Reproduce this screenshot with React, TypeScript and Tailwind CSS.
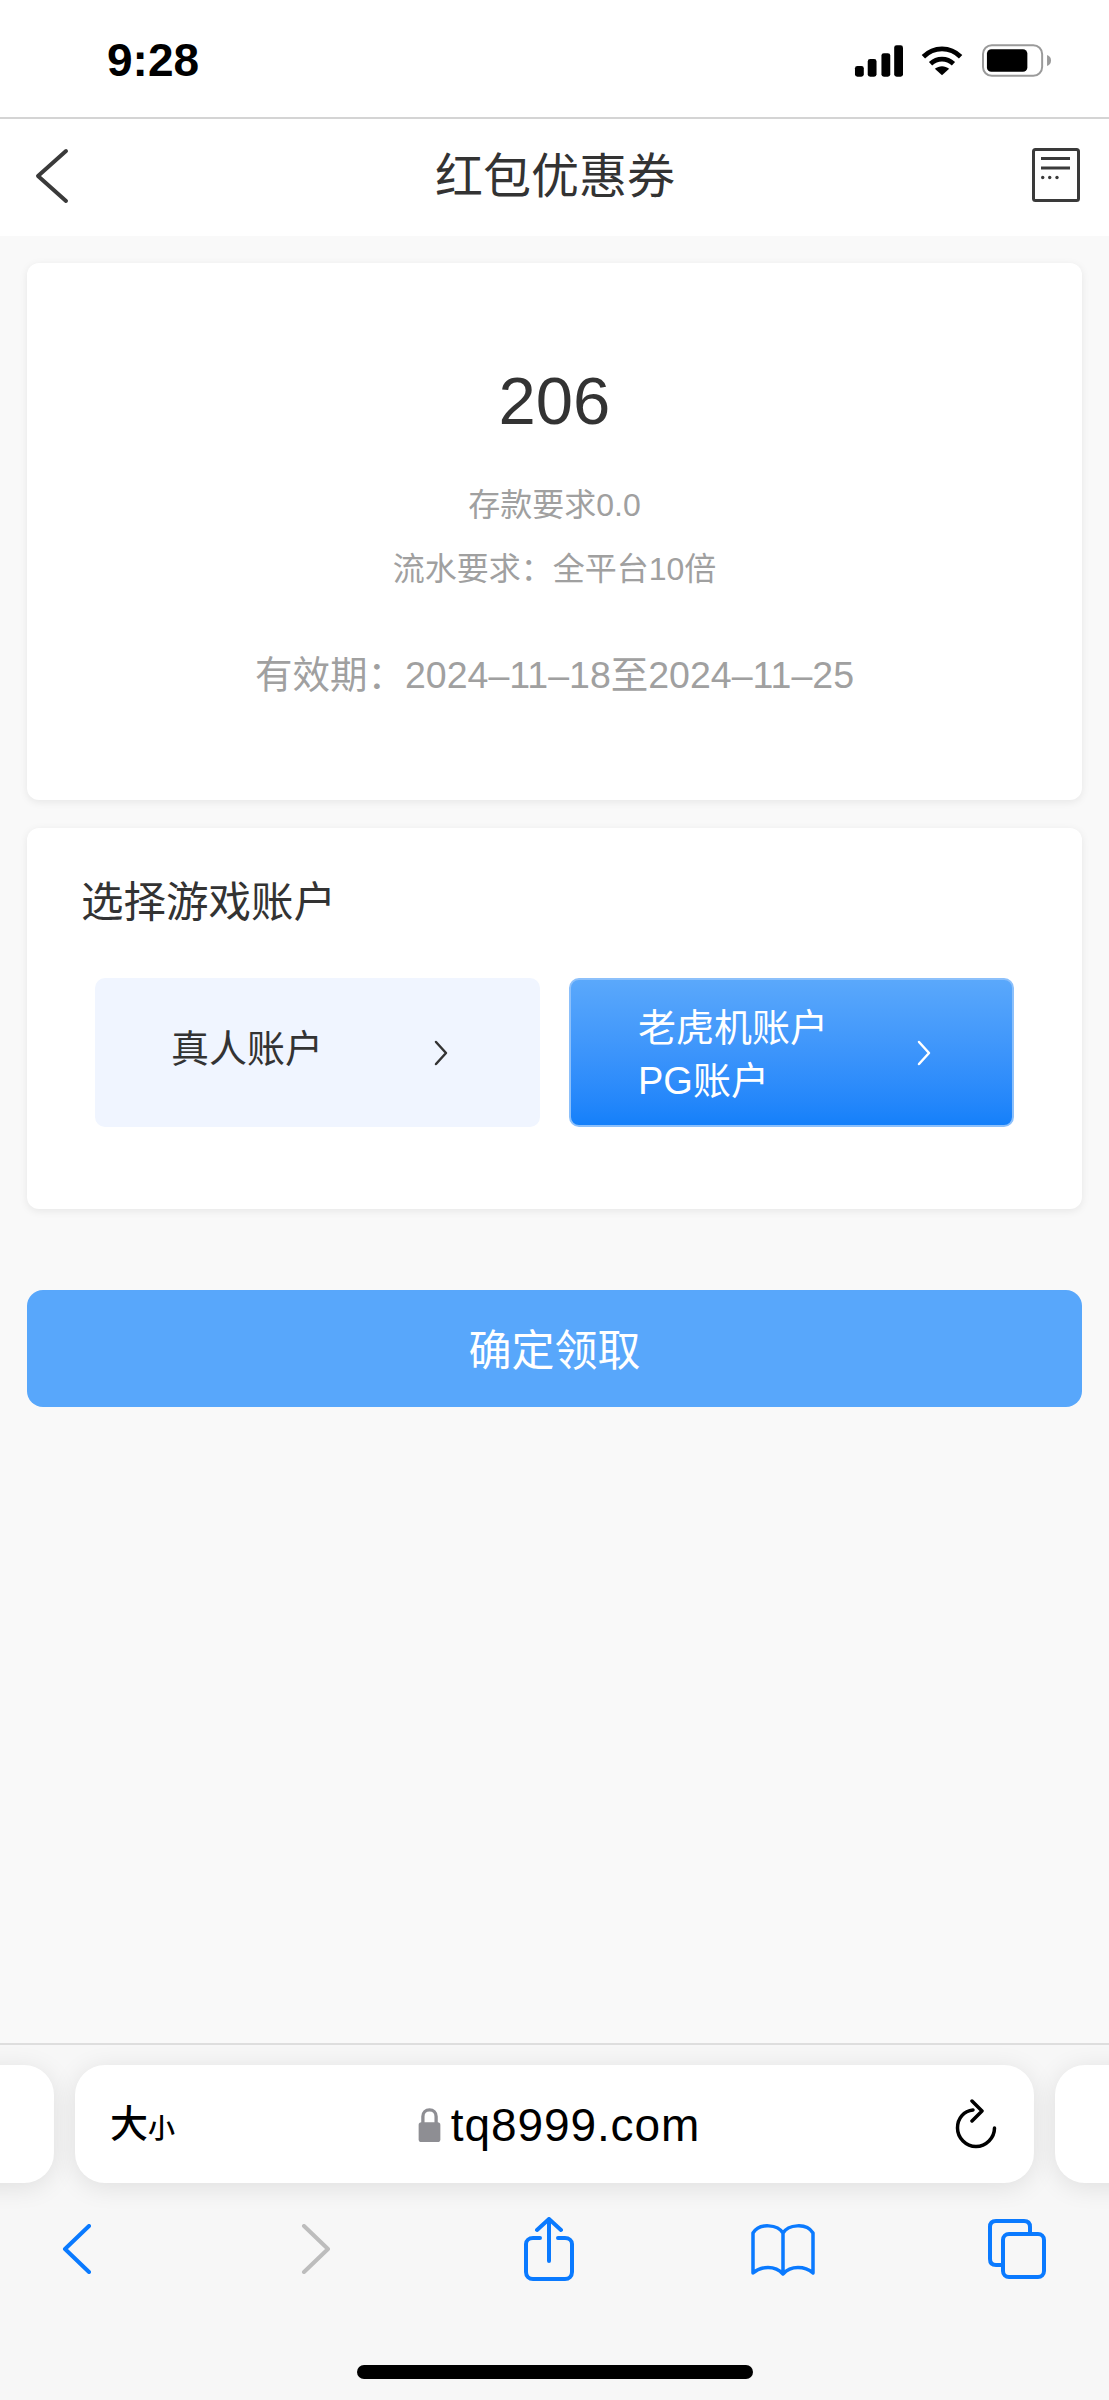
import React from 'react';

const cjk = "font-['Liberation_Sans','Noto_Sans_CJK_SC',sans-serif]";
const pill = 'h-[118px] bg-white rounded-[30px] shadow-[0_4px_26px_rgba(0,0,0,0.1)]';

const StatusBar: React.FC = () => (
  <div className="h-[117px] bg-white flex items-start justify-between pl-[107px] pr-[57px] pt-[34px]">
    <span className="text-[46px] leading-[52px] font-bold text-black font-['Liberation_Sans',sans-serif]">9:28</span>
    <div className="flex items-center gap-[18px] pt-[10px]">
      <svg width="49" height="32" viewBox="0 0 50 32" fill="#000">
        <rect x="1" y="21" width="9" height="11" rx="2.5" />
        <rect x="14" y="14" width="9" height="18" rx="2.5" />
        <rect x="28" y="8" width="9" height="24" rx="2.5" />
        <rect x="41" y="0" width="9" height="32" rx="2.5" />
      </svg>
      <svg width="42" height="32" viewBox="0 0 44 32" fill="none" stroke="#000" strokeWidth="5">
        <path d="M2.500 11.500C13.500 0.500 30.500 0.500 41.500 11.500" />
        <path d="M10 19C17 12.500 27 12.500 34 19" />
        <path d="M22 31L14.500 24C19 20.500 25 20.500 29.500 24Z" fill="#000" stroke="none" />
      </svg>
      <svg width="70" height="33" viewBox="0 0 71 33" fill="none" className="ml-[1px]">
        <rect x="1" y="1" width="60" height="31" rx="9" stroke="#9a9a9a" strokeWidth="2" />
        <rect x="5" y="5" width="41" height="23" rx="4.500" fill="#000" />
        <path d="M66 11C69 12 70 14 70 16.500C70 19 69 21 66 22Z" fill="#9a9a9a" />
      </svg>
    </div>
  </div>
);

const Header: React.FC = () => (
  <div className="h-[119px] bg-white border-t-2 border-[#d4d4d4] flex items-center justify-between pl-[35px] pr-[29px]">
    <div className="w-[60px]">
      <svg width="34" height="56" viewBox="0 0 34 56" fill="none" stroke="#3a3a3a" strokeWidth="4" strokeLinecap="round" strokeLinejoin="round" className="mt-[-4px]">
        <path d="M31 3L3 28L31 53" />
      </svg>
    </div>
    <h1 className={`text-[48px] leading-none font-normal text-[#333333] mt-[-2px] ${cjk}`}>红包优惠券</h1>
    <div className="w-[65px] flex justify-end">
      <svg width="48" height="54" viewBox="0 0 48 54" fill="none" stroke="#3a3a3a" className="mt-[-6px]">
        <rect x="1.500" y="1.500" width="45" height="51" rx="2" strokeWidth="3" />
        <path d="M9 10.500H38M9 20H38" strokeWidth="3" />
        <circle cx="10.700" cy="29.500" r="1.700" fill="#3a3a3a" stroke="none" />
        <circle cx="17.700" cy="29.500" r="1.700" fill="#3a3a3a" stroke="none" />
        <circle cx="25" cy="29.500" r="1.700" fill="#3a3a3a" stroke="none" />
      </svg>
    </div>
  </div>
);

const Chevron: React.FC<{ color: string }> = ({ color }) => (
  <svg width="16" height="26" viewBox="0 0 16 26" fill="none" stroke={color} strokeWidth="2.500" strokeLinecap="round" strokeLinejoin="round">
    <path d="M3 2L13 13L3 24" />
  </svg>
);

const CouponCard: React.FC = () => (
  <div className="h-[537px] bg-white rounded-[12px] shadow-[0_2px_8px_rgba(0,0,0,0.08)] flex flex-col items-center pt-[100px]">
    <div className={`text-[67px] leading-[76px] text-[#333333] ${cjk}`}>206</div>
    <div className={`text-[32px] leading-[40px] text-[#a0a0a0] mt-[46px] ${cjk}`}>存款要求0.0</div>
    <div className={`text-[32px] leading-[40px] text-[#a0a0a0] mt-[24px] ${cjk}`}>流水要求{'\uFF1A'}全平台10倍</div>
    <div className={`text-[37.500px] leading-[46px] text-[#a0a0a0] mt-[63px] ${cjk}`}>有效期{'\uFF1A'}2024–11–18至2024–11–25</div>
  </div>
);

const AccountCard: React.FC = () => (
  <div className="h-[381px] bg-white rounded-[12px] shadow-[0_2px_8px_rgba(0,0,0,0.08)] mt-[28px] pt-[47px] px-[54px]">
    <div className={`text-[42.500px] leading-[56px] text-[#333333] ${cjk}`}>选择游戏账户</div>
    <div className="flex gap-[29px] mt-[47px] ml-[14px]">
      <div className="w-[445px] h-[149px] rounded-[10px] bg-[#f0f5ff] flex items-center pl-[76px] pr-[91px] justify-between">
        <span className={`text-[38px] leading-[46px] text-[#333333] mt-[-8px] ${cjk}`}>真人账户</span>
        <Chevron color="#333333" />
      </div>
      <div className="w-[445px] h-[149px] rounded-[10px] border-2 border-[#8cc0fb] bg-gradient-to-b from-[#5aa8fb] to-[#1480fa] flex items-center pl-[67px] pr-[80px] justify-between">
        <span className={`text-[38px] leading-[53px] text-white mt-[5px] ${cjk}`}>
          老虎机账户
          <br />
          PG账户
        </span>
        <Chevron color="#ffffff" />
      </div>
    </div>
  </div>
);

const BrowserBar: React.FC = () => (
  <div className="h-[357px] bg-[#f7f7f7] border-t-2 border-[#dedede]">
    <div className="flex gap-[21px] mt-[20px] -mx-[100px] justify-center">
      <div className={`w-[154px] ${pill}`} />
      <div className={`w-[959px] ${pill} flex items-center justify-between pl-[35px] pr-[37px]`}>
        <span className={`text-[38px] leading-none font-medium text-black flex items-end ${cjk}`}>
          大<span className="text-[27px] leading-none">小</span>
        </span>
        <div className="flex items-center gap-[10px] mr-[12px] mt-[2px]">
          <svg width="23" height="34" viewBox="0 0 24 36" fill="none">
            <path d="M5 17V9C5 4.500 8 2 12 2C16 2 19 4.500 19 9V17" stroke="#8e8e93" strokeWidth="3.500" />
            <rect x="0.500" y="15" width="23" height="21" rx="3" fill="#8e8e93" />
          </svg>
          <span className="text-[46px] leading-none tracking-[0.9px] text-black font-['Liberation_Sans',sans-serif]">tq8999.com</span>
        </div>
        <svg width="42" height="50" viewBox="0 0 42 50" fill="none" stroke="#000" strokeWidth="3.500" strokeLinecap="round" strokeLinejoin="round">
          <path d="M18 11C9 12 2.500 19 2.500 29C2.500 39 11 47.500 21 47.500C31 47.500 39.500 39 39.500 29" />
          <path d="M17 2L27 12L17 22" />
        </svg>
      </div>
      <div className={`w-[154px] ${pill}`} />
    </div>
    <div className="flex items-center pl-[62px] mt-[34px] h-[63px]">
      <svg width="30" height="50" viewBox="0 0 30 50" fill="none" stroke="#0a7aff" strokeWidth="4" strokeLinecap="round" strokeLinejoin="round">
        <path d="M27 2L3 25L27 48" />
      </svg>
      <svg width="30" height="50" viewBox="0 0 30 50" fill="none" stroke="#bdbdbd" strokeWidth="4" strokeLinecap="round" strokeLinejoin="round" className="ml-[209px]">
        <path d="M3 2L27 25L3 48" />
      </svg>
      <svg width="50" height="64" viewBox="0 0 50 64" fill="none" stroke="#0a7aff" strokeWidth="4" strokeLinecap="round" strokeLinejoin="round" className="ml-[193px]">
        <path d="M25 44V2M13 13L25 2L37 13" />
        <path d="M16 21H9C5 21 2 23.500 2 27V55C2 59 5 62 9 62H41C45 62 48 59 48 55V27C48 23.500 45 21 41 21H34" />
      </svg>
      <svg width="64" height="54" viewBox="0 0 64 54" fill="none" stroke="#0a7aff" strokeWidth="3.500" strokeLinecap="round" strokeLinejoin="round" className="ml-[177px]">
        <path d="M32 11V50M32 11C27 3 9 0 2 11V51C10 44 24 43 32 52C40 43 54 44 62 51V11C55 0 37 3 32 11Z" />
      </svg>
      <svg width="60" height="60" viewBox="0 0 58 60" fill="none" stroke="#0a7aff" strokeWidth="4" strokeLinejoin="round" className="ml-[172px]">
        <path d="M16 46H8C4 46 2 44 2 40V8C2 4 4 2 8 2H36C40 2 42 4 42 8V15" />
        <rect x="15" y="15" width="41" height="43" rx="6" />
      </svg>
    </div>
    <div className="w-[396px] h-[14px] rounded-full bg-black mx-auto mt-[85px]" />
  </div>
);

export default function App() {
  return (
    <div className="w-[1109px] h-[2400px] bg-[#f9f9f9] flex flex-col overflow-hidden">
      <StatusBar />
      <Header />
      <main className="flex-1 px-[27px] pt-[27px]">
        <CouponCard />
        <AccountCard />
        <button className={`w-full h-[117px] mt-[81px] pt-[5px] rounded-[16px] bg-[#58a7fb] text-white text-[43px] ${cjk}`}>确定领取</button>
      </main>
      <BrowserBar />
    </div>
  );
}
